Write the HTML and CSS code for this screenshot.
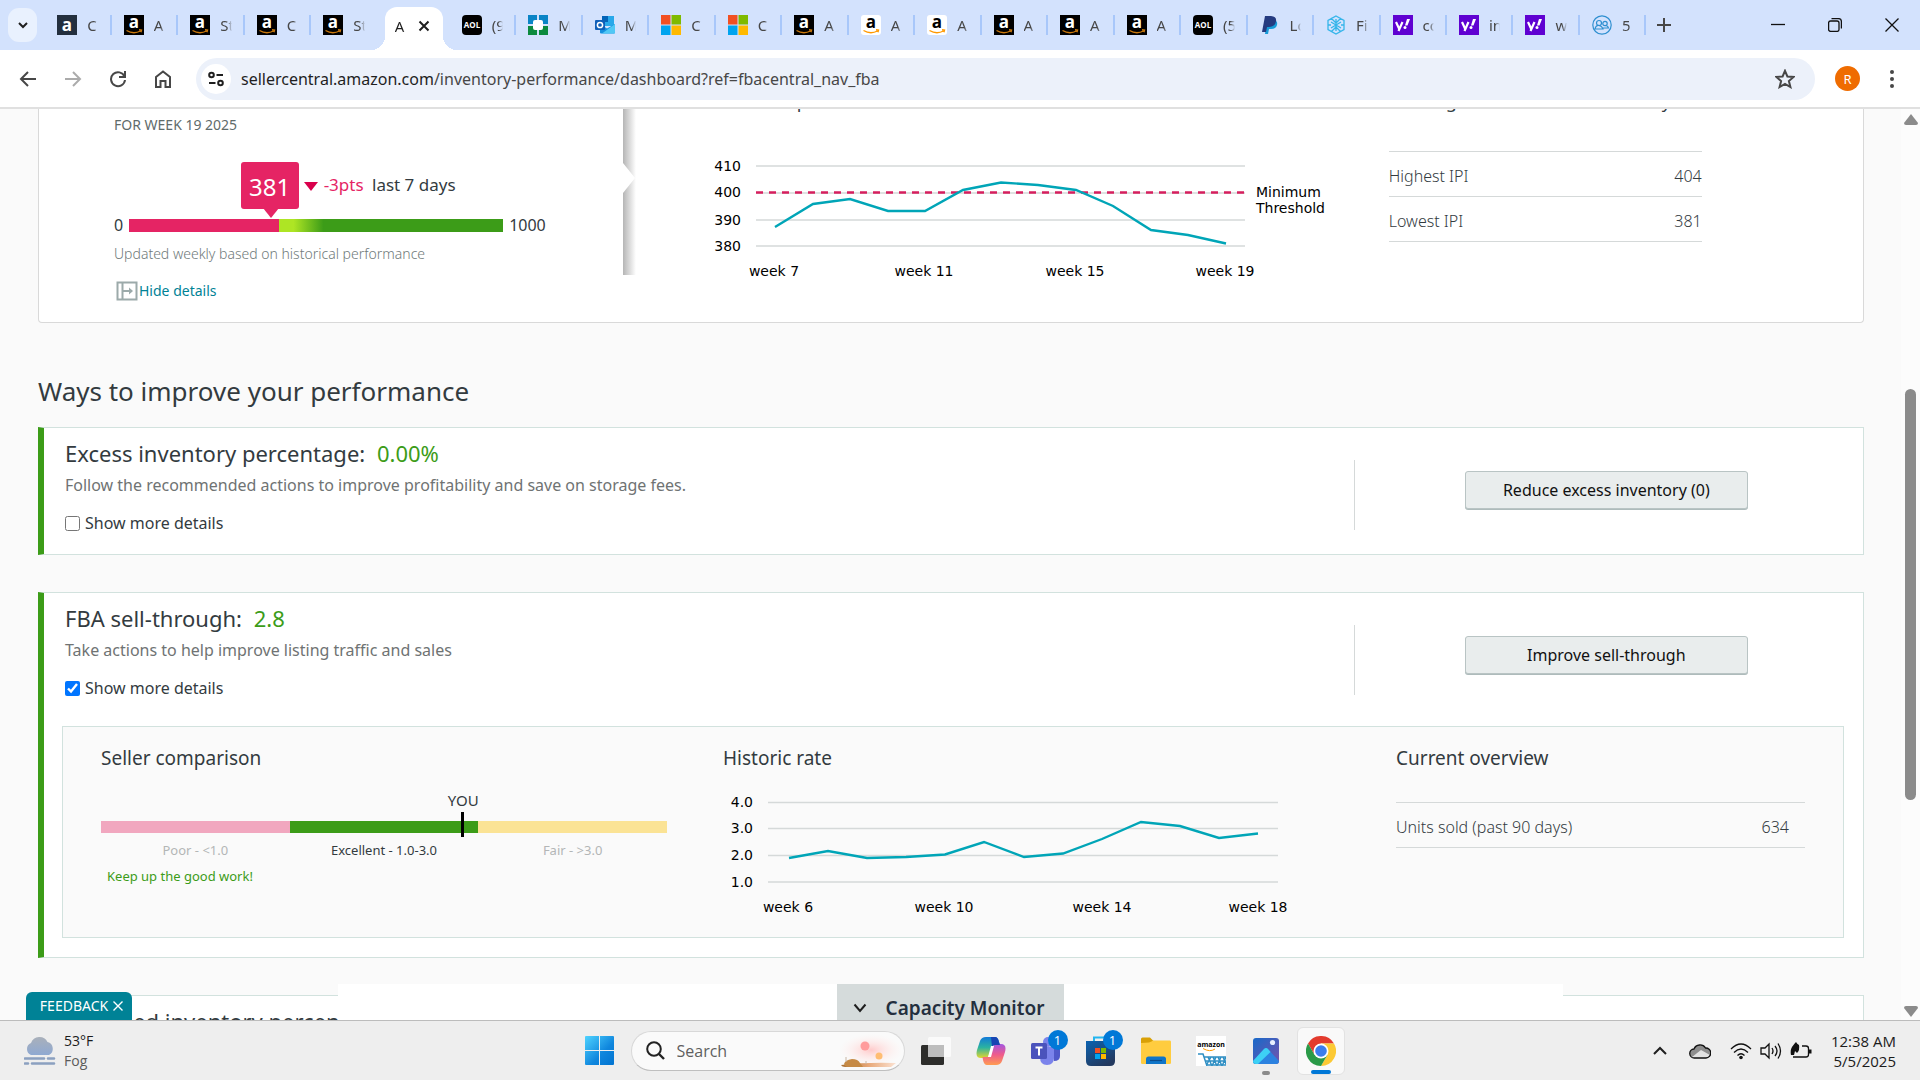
FILE: index.html
```html
<!DOCTYPE html>
<html lang="en">
<head>
    <meta charset="UTF-8">
    <meta name="viewport" content="width=device-width, initial-scale=1.0">
    <title>Inventory Performance</title>
    <link rel="stylesheet" href="styles.css">
</head>
<body>

<!-- Shared icons -->
<svg class="sprite" aria-hidden="true">
    <symbol id="fav-amazon-navy" viewBox="0 0 20 20">
        <rect width="20" height="20" fill="#232f3e"/>
        <text x="10" y="16" text-anchor="middle" class="fav-a" fill="#fff">a</text>
    </symbol>
    <symbol id="fav-amazon" viewBox="0 0 20 20">
        <rect width="20" height="20" fill="#000"/>
        <text x="10" y="13" text-anchor="middle" class="fav-a" fill="#fff">a</text>
        <path d="M2.5 15.5q7 4.200 14 .5M15 14.700l2.500 .3-.6 2.300" fill="none" stroke="#c9780c" stroke-width="1.400"/>
    </symbol>
    <symbol id="fav-amazon-white" viewBox="0 0 20 20">
        <rect width="20" height="20" rx="3" fill="#fff"/>
        <text x="10" y="13" text-anchor="middle" class="fav-a" fill="#000">a</text>
        <path d="M2.500 15.500q7 4.200 14 .5M15 14.700l2.500 .3-.6 2.300" fill="none" stroke="#f90" stroke-width="1.400"/>
    </symbol>
    <symbol id="fav-aol" viewBox="0 0 20 20">
        <rect width="20" height="20" rx="4" fill="#000"/>
        <text x="10" y="13" text-anchor="middle" class="fav-aol" fill="#fff">AOL</text>
    </symbol>
    <symbol id="fav-ms" viewBox="0 0 20 20">
        <path d="M0 0h9.500v9.500H0z" fill="#f25022"/>
        <path d="M10.500 0H20v9.500h-9.500z" fill="#7fba00"/>
        <path d="M0 10.500h9.500V20H0z" fill="#00a4ef"/>
        <path d="M10.500 10.500H20V20h-9.500z" fill="#ffb900"/>
    </symbol>
    <symbol id="fav-clover" viewBox="0 0 20 20">
        <path d="M0 0h9v9H0zM11 0h9v9h-9z" fill="#0a84c6"/>
        <path d="M0 11h9v9H0zM11 11h9v9h-9z" fill="#0b8a3e"/>
        <rect x="5" y="5" width="10" height="10" rx="2" fill="#fff"/>
    </symbol>
    <symbol id="fav-outlook" viewBox="0 0 20 20">
        <path d="M7 1h12v10H7z" fill="#28a8ea"/>
        <path d="M7 1h6v6H7z" fill="#0364b8"/>
        <path d="M5 9l7 4.500L20 9v8.500a1 1 0 0 1-1 1H6a1 1 0 0 1-1-1z" fill="#1490df"/>
        <path d="M20 9l-13 9.500h12a1 1 0 0 0 1-1z" fill="#50c8f5"/>
        <rect y="5" width="10" height="10" rx="1" fill="#0f5fb8"/>
        <circle cx="5" cy="10" r="2.600" fill="none" stroke="#fff" stroke-width="1.500"/>
    </symbol>
    <symbol id="fav-paypal" viewBox="0 0 20 20">
        <path d="M7 5h7q4 1 3 5t-6 4h-2l-1 5H5z" fill="#179bd7"/>
        <path d="M5 1h6q6 .5 5 5.500T9 12H7l-1 5H2z" fill="#253b80"/>
    </symbol>
    <symbol id="fav-hex" viewBox="0 0 20 20">
        <path d="M10 1l8 4.500v9L10 19l-8-4.500v-9zM10 4v12M5 7l10 6M15 7L5 13M10 8l-5-5M10 8l5-5M10 12l-5 5M10 12l5 5M2 10h3M15 10h3" fill="none" stroke="#35b5ea" stroke-width="1.300"/>
    </symbol>
    <symbol id="fav-yahoo" viewBox="0 0 20 20">
        <rect width="20" height="20" fill="#5f01d1"/>
        <path d="M3 7l3 6.500M9.500 7L5.500 16" fill="none" stroke="#fff" stroke-width="2.200"/>
        <path d="M14 4h3l-2.500 6.500H12z" fill="#fff"/>
        <circle cx="12" cy="12.500" r="1.500" fill="#fff"/>
    </symbol>
    <symbol id="fav-people" viewBox="0 0 20 20">
        <g fill="none" stroke="#2e8fd0" stroke-width="1.200">
            <circle cx="10" cy="10" r="9.200"/>
            <circle cx="7" cy="8" r="2.500"/>
            <circle cx="13" cy="8.500" r="2.200"/>
            <path d="M3 14q1-4 4-3.500t4 3.500zM11 13h5.500q-.5-2.500-3.500-2.500"/>
        </g>
    </symbol>
</svg>

<!-- Browser tabs -->
<header class="browser">
    <div class="tab-strip">
        <button class="tab-search" aria-label="Search tabs">
            <svg width="14" height="14" viewBox="0 0 14 14"><path d="M3 5l4 4 4-4" class="stroke-dark"/></svg>
        </button>
        <nav class="tabs" aria-label="Open tabs">
            <a href="#" class="tab"><svg class="favicon"><use href="#fav-amazon-navy"/></svg><span>C</span></a>
            <a href="#" class="tab"><svg class="favicon"><use href="#fav-amazon"/></svg><span>A</span></a>
            <a href="#" class="tab"><svg class="favicon"><use href="#fav-amazon"/></svg><span>St</span></a>
            <a href="#" class="tab"><svg class="favicon"><use href="#fav-amazon"/></svg><span>C</span></a>
            <a href="#" class="tab tab-before"><svg class="favicon"><use href="#fav-amazon"/></svg><span>St</span></a>
            <div class="tab tab-active">
                <span>A</span>
                <button class="tab-close" aria-label="Close tab">
                    <svg width="12" height="12" viewBox="0 0 12 12"><path d="M1.500 1.500l9 9M10.500 1.500l-9 9" class="stroke-dark"/></svg>
                </button>
            </div>
            <a href="#" class="tab"><svg class="favicon"><use href="#fav-aol"/></svg><span>(9</span></a>
            <a href="#" class="tab"><svg class="favicon"><use href="#fav-clover"/></svg><span>M</span></a>
            <a href="#" class="tab"><svg class="favicon"><use href="#fav-outlook"/></svg><span>M</span></a>
            <a href="#" class="tab"><svg class="favicon"><use href="#fav-ms"/></svg><span>C</span></a>
            <a href="#" class="tab"><svg class="favicon"><use href="#fav-ms"/></svg><span>C</span></a>
            <a href="#" class="tab"><svg class="favicon"><use href="#fav-amazon"/></svg><span>A</span></a>
            <a href="#" class="tab"><svg class="favicon"><use href="#fav-amazon-white"/></svg><span>A</span></a>
            <a href="#" class="tab"><svg class="favicon"><use href="#fav-amazon-white"/></svg><span>A</span></a>
            <a href="#" class="tab"><svg class="favicon"><use href="#fav-amazon"/></svg><span>A</span></a>
            <a href="#" class="tab"><svg class="favicon"><use href="#fav-amazon"/></svg><span>A</span></a>
            <a href="#" class="tab"><svg class="favicon"><use href="#fav-amazon"/></svg><span>A</span></a>
            <a href="#" class="tab"><svg class="favicon"><use href="#fav-aol"/></svg><span>(5</span></a>
            <a href="#" class="tab"><svg class="favicon"><use href="#fav-paypal"/></svg><span>Lo</span></a>
            <a href="#" class="tab"><svg class="favicon"><use href="#fav-hex"/></svg><span>Fi</span></a>
            <a href="#" class="tab"><svg class="favicon"><use href="#fav-yahoo"/></svg><span>co</span></a>
            <a href="#" class="tab"><svg class="favicon"><use href="#fav-yahoo"/></svg><span>in</span></a>
            <a href="#" class="tab"><svg class="favicon"><use href="#fav-yahoo"/></svg><span>w</span></a>
            <a href="#" class="tab"><svg class="favicon"><use href="#fav-people"/></svg><span>5</span></a>
        </nav>
        <button class="new-tab" aria-label="New tab">
            <svg width="14" height="14" viewBox="0 0 14 14"><path d="M7 0v14M0 7h14" class="stroke-gray"/></svg>
        </button>
        <div class="window-buttons">
            <button aria-label="Minimize"><svg width="14" height="14" viewBox="0 0 14 14"><path d="M0 6.500h14" class="stroke-thin"/></svg></button>
            <button aria-label="Restore"><svg width="14" height="14" viewBox="0 0 14 14"><rect x=".6" y="3" width="10.400" height="10.400" rx="2" class="stroke-thin"/><path d="M3.500 .6h7q2.900 0 2.900 2.900v7" class="stroke-thin"/></svg></button>
            <button aria-label="Close"><svg width="14" height="14" viewBox="0 0 14 14"><path d="M.5 .5l13 13M13.500 .5l-13 13" class="stroke-thin"/></svg></button>
        </div>
    </div>

    <!-- Toolbar -->
    <div class="toolbar">
        <button class="nav-btn" aria-label="Back"><svg width="18" height="18" viewBox="0 0 18 18"><path d="M17 9H2M9 2L2 9l7 7" class="stroke-gray"/></svg></button>
        <button class="nav-btn nav-disabled" aria-label="Forward" disabled><svg width="18" height="18" viewBox="0 0 18 18"><path d="M1 9h15M9 2l7 7-7 7" class="stroke-gray"/></svg></button>
        <button class="nav-btn" aria-label="Reload"><svg width="18" height="18" viewBox="0 0 18 18"><path d="M15.500 6.500A7 7 0 1 0 16 10M16 1v6h-6" class="stroke-gray"/></svg></button>
        <button class="nav-btn" aria-label="Home"><svg width="18" height="18" viewBox="0 0 18 18"><path d="M2 7l7-5.500L16 7v10h-4.500v-6h-5v6H2z" class="stroke-gray"/></svg></button>
        <div class="omnibox">
            <button class="site-info" aria-label="Site information">
                <svg width="16" height="16" viewBox="0 0 16 16"><g class="stroke-dark"><circle cx="3.500" cy="4" r="2.300"/><path d="M8.500 4H15M1 12h6.500"/><circle cx="12.500" cy="12" r="2.300"/></g></svg>
            </button>
            <a href="#" class="url">sellercentral.amazon.com<span>/inventory-performance/dashboard?ref=fbacentral_nav_fba</span></a>
            <button class="bookmark" aria-label="Bookmark this page">
                <svg width="20" height="20" viewBox="0 0 20 20"><path d="M10 1.800l2.400 5.700 6.200.5-4.700 4 1.500 6L10 14.800 4.600 18l1.500-6-4.700-4 6.200-.5z" class="stroke-gray"/></svg>
            </button>
        </div>
        <button class="profile" aria-label="Profile">R</button>
        <button class="menu" aria-label="Menu"><svg width="6" height="20" viewBox="0 0 6 20"><g fill="#474747"><circle cx="3" cy="3" r="2"/><circle cx="3" cy="10" r="2"/><circle cx="3" cy="17" r="2"/></g></svg></button>
    </div>
</header>

<div class="viewport">
    <main class="page">

        <!-- Inventory performance index -->
        <section class="ipi-card">
            <div class="ipi-score">
                <p class="ipi-week">FOR WEEK 19 2025</p>
                <div class="gauge">
                    <div class="gauge-head" style="--score: 38.1%">
                        <div class="gauge-badge">381</div>
                        <p class="gauge-trend"><i class="arrow-down"></i><span>-3pts</span> last 7 days</p>
                    </div>
                    <span class="gauge-min">0</span>
                    <div class="gauge-bar"></div>
                    <span class="gauge-max">1000</span>
                </div>
                <p class="ipi-note">Updated weekly based on historical performance</p>
                <a href="#" class="hide-details">
                    <svg width="22" height="20" viewBox="0 0 22 20"><path d="M1.500 1.500h19v17h-19zM6.500 1.500v17M7 10h8" fill="none" stroke="#9caaaa" stroke-width="2"/><path d="M13 6.500l4 3.500-4 3.500z" fill="#9caaaa"/></svg>Hide details
                </a>
            </div>
            <div class="ipi-trend">
                <div class="cut-heading" aria-hidden="true"><span>p</span></div>
                <svg class="chart" width="640" height="130" viewBox="0 0 640 130" role="img" aria-label="IPI score by week">
                    <g class="grid-lines"><path d="M54 11h489M54 38h489M54 65h489M54 91h489"/></g>
                    <path class="threshold" d="M54 37.500h489"/>
                    <polyline class="series" points="73,72 111,49 148,44 186,56 223,56 261,35 299,27.500 336,30 374,35 411,51 449,75 486,80 524,88.500"/>
                    <g class="axis-y"><text x="39" y="16">410</text><text x="39" y="42">400</text><text x="39" y="70">390</text><text x="39" y="96">380</text></g>
                    <g class="axis-x"><text x="72" y="121">week 7</text><text x="222" y="121">week 11</text><text x="373" y="121">week 15</text><text x="523" y="121">week 19</text></g>
                    <g class="axis-note"><text x="554" y="42">Minimum</text><text x="554" y="58">Threshold</text></g>
                </svg>
            </div>
            <div class="ipi-summary">
                <div class="cut-heading" aria-hidden="true"><span>g</span><span>y</span></div>
                <table class="facts">
                    <tr><th scope="row">Highest IPI</th><td>404</td></tr>
                    <tr><th scope="row">Lowest IPI</th><td>381</td></tr>
                </table>
            </div>
        </section>

        <h2>Ways to improve your performance</h2>

        <!-- Excess inventory -->
        <section class="metric">
            <div class="metric-row">
                <div class="metric-text">
                    <h3>Excess inventory percentage: <span>0.00%</span></h3>
                    <p>Follow the recommended actions to improve profitability and save on storage fees.</p>
                    <label class="more"><input type="checkbox"> Show more details</label>
                </div>
                <div class="metric-action"><button class="action-btn">Reduce excess inventory (0)</button></div>
            </div>
        </section>

        <!-- Sell-through -->
        <section class="metric">
            <div class="metric-row">
                <div class="metric-text">
                    <h3>FBA sell-through: <span>2.8</span></h3>
                    <p>Take actions to help improve listing traffic and sales</p>
                    <label class="more"><input type="checkbox" checked> Show more details</label>
                </div>
                <div class="metric-action"><button class="action-btn">Improve sell-through</button></div>
            </div>
            <div class="details">
                <div class="details-col">
                    <h4>Seller comparison</h4>
                    <div class="compare">
                        <div class="compare-you" style="--you: 64%"><span>YOU</span></div>
                        <div class="compare-bar"><i class="poor"></i><i class="excellent"></i><i class="fair"></i></div>
                        <div class="compare-labels"><span>Poor - &lt;1.0</span><strong>Excellent - 1.0-3.0</strong><span>Fair - &gt;3.0</span></div>
                    </div>
                    <p class="praise">Keep up the good work!</p>
                </div>
                <div class="details-col">
                    <h4>Historic rate</h4>
                    <svg class="chart" width="600" height="130" viewBox="0 0 600 130" role="img" aria-label="Sell-through by week">
                        <g class="grid-lines"><path d="M45 12.500h510M45 38.500h510M45 65.500h510M45 92h510"/></g>
                        <polyline class="series" points="66,68 105,61 144,68 183,67 222,64.500 261,52 301,67 340,63.500 379,49 418,32 457,36 496,48 535,43.500"/>
                        <g class="axis-y"><text x="30" y="17">4.0</text><text x="30" y="43">3.0</text><text x="30" y="70">2.0</text><text x="30" y="97">1.0</text></g>
                        <g class="axis-x"><text x="65" y="122">week 6</text><text x="221" y="122">week 10</text><text x="379" y="122">week 14</text><text x="535" y="122">week 18</text></g>
                    </svg>
                </div>
                <div class="details-col">
                    <h4>Current overview</h4>
                    <table class="facts facts-inset">
                        <tr><th scope="row">Units sold (past 90 days)</th><td>634</td></tr>
                    </table>
                </div>
            </div>
        </section>

        <!-- Stranded inventory -->
        <section class="metric">
            <div class="metric-row">
                <div class="metric-text">
                    <h3>Stranded inventory percentage:</h3>
                </div>
            </div>
        </section>
    </main>

    <div class="scrollbar">
        <svg width="14" height="12" viewBox="0 0 14 12"><path d="M7 0l7 9q0 2-2 2H2q-2 0-2-2z"/></svg>
        <div class="scroll-track"><div class="scroll-thumb"></div></div>
        <svg width="14" height="12" viewBox="0 0 14 12"><path d="M7 11L0 2q0-2 2-2h10q2 0 2 2z"/></svg>
    </div>

    <div class="capacity">
        <button class="capacity-btn">
            <svg width="14" height="10" viewBox="0 0 14 10"><path d="M1.500 1.500L7 8l5.500-6.500" class="stroke-dark"/></svg>
            Capacity Monitor
        </button>
    </div>
    <button class="feedback">FEEDBACK <svg width="10" height="10" viewBox="0 0 10 10"><path d="M.5 .5l9 9M9.500 .5l-9 9" stroke="#fff" stroke-width="1.400"/></svg></button>
</div>

<!-- Taskbar -->
<footer class="taskbar">
    <button class="weather">
        <svg width="32" height="30" viewBox="0 0 32 30">
            <defs><linearGradient id="cloud" x2="0" y2="1"><stop offset="0" stop-color="#a9b0ba"/><stop offset="1" stop-color="#8fa9d2"/></linearGradient></defs>
            <path d="M7 19a6.500 6.500 0 0 1 0-12 9 9 0 0 1 16.500-1A7 7 0 0 1 25 19z" fill="url(#cloud)"/>
            <path d="M1 22.500h19M24 22.500h6M1 27.500h3M8 27.500h22" stroke="#8ba0c0" stroke-width="2.600" stroke-linecap="round"/>
        </svg>
        <span>53°F<small>Fog</small></span>
    </button>

    <div class="apps">
        <button class="app" aria-label="Start">
            <svg width="29" height="29" viewBox="0 0 29 29">
                <defs><linearGradient id="win" x2="1" y2="1"><stop offset="0" stop-color="#4fd3ff"/><stop offset=".6" stop-color="#0f86dd"/><stop offset="1" stop-color="#0173d0"/></linearGradient></defs>
                <path d="M1 0h13v14H0V1q0-1 1-1zM15 0h13q1 0 1 1v13H15zM0 15h14v14H1q-1 0-1-1zM15 15h14v13q0 1-1 1H15z" fill="url(#win)"/>
            </svg>
        </button>
        <div class="search">
            <svg width="19" height="19" viewBox="0 0 19 19"><circle cx="8" cy="8" r="6.800" fill="none" stroke="#222" stroke-width="2"/><path d="M13 13l5 5" stroke="#222" stroke-width="2.400"/></svg>
            <input type="text" placeholder="Search" aria-label="Search">
            <svg class="search-art" width="64" height="36" viewBox="0 0 64 36">
                <defs>
                    <radialGradient id="glow"><stop offset="0" stop-color="#ffcaca"/><stop offset="1" stop-color="#fff0ee" stop-opacity="0"/></radialGradient>
                    <linearGradient id="sand"><stop offset="0" stop-color="#a87034"/><stop offset=".5" stop-color="#e8a878"/><stop offset="1" stop-color="#fbe2d2"/></linearGradient>
                </defs>
                <ellipse cx="34" cy="17" rx="32" ry="16" fill="url(#glow)"/>
                <circle cx="28" cy="13" r="4.500" fill="#ff9c9c"/>
                <circle cx="42" cy="23" r="3.500" fill="#ffbd73"/>
                <path d="M4 32q25-3 55-2l-5 4H8q-3 0-4-2z" fill="url(#sand)"/>
                <path d="M7 31q1-4 8-5 6 0 8 4l3 4H12q-4 0-5-3z" fill="#c68a45"/>
                <path d="M9 29v-5M29 31v-3" stroke="#c9b6a5"/>
            </svg>
        </div>
        <button class="app" aria-label="Task view">
            <svg width="30" height="28" viewBox="0 0 30 28"><rect y="8" width="23" height="20" rx="1.500" fill="#2d2d2b"/><rect x="7" width="23" height="20" rx="1.500" fill="#fafafa"/><path d="M7 8h16v12H8.500Q7 20 7 18.500z" fill="#bdbdbd"/></svg>
        </button>
        <button class="app" aria-label="Copilot">
            <svg width="30" height="28" viewBox="0 0 30 28">
                <defs>
                    <linearGradient id="cp1" x2="0" y2="1"><stop offset="0" stop-color="#1279d8"/><stop offset=".5" stop-color="#2bb3a0"/><stop offset="1" stop-color="#e2d62e"/></linearGradient>
                    <linearGradient id="cp2" x2="0" y2="1"><stop offset="0" stop-color="#a357e0"/><stop offset=".5" stop-color="#ee5a8d"/><stop offset="1" stop-color="#ff9c50"/></linearGradient>
                </defs>
                <path d="M10 0h9q3 0 4 5l1 3h-5q-3 0-4 4l-2 6q-1 3-4 3H5q-6 0-4-8l3-9q1.500-4 6-4z" fill="url(#cp1)"/>
                <path d="M20 28h-9q-3 0-4-5l-.5-3H11q3 0 4-4l2-6q1-3 4-3h4q6 0 4 8l-3 9q-1.500 4-6 4z" fill="url(#cp2)"/>
                <path d="M15 0h4q3 0 4 5l1 3h-5q-2 0-3 2z" fill="#1745b3"/>
                <path d="M12 20l3-11h3l-3 11z" fill="#fff"/>
            </svg>
        </button>
        <button class="app" aria-label="Teams">
            <svg width="30" height="28" viewBox="0 0 30 28"><circle cx="17" cy="5" r="5" fill="#7b83eb"/><path d="M20 10h9v9q0 5-6 5z" fill="#5059c9"/><path d="M10 10h13v10q0 8-7 8t-7-8z" fill="#7b83eb"/><rect y="6" width="16" height="16" rx="1.500" fill="#4b53bc"/><path d="M4.500 10.500h7M8 10.500v8" stroke="#fff" stroke-width="2"/></svg>
            <span class="badge">1</span>
        </button>
        <button class="app" aria-label="Microsoft Store">
            <svg width="30" height="30" viewBox="0 0 30 30">
                <defs><linearGradient id="store" x2="0.600" y2="1"><stop offset="0" stop-color="#0b62b0"/><stop offset="1" stop-color="#23395f"/></linearGradient></defs>
                <path d="M8 6V1.500h14V6" fill="none" stroke="#23b6f0" stroke-width="2"/>
                <path d="M0 5h29v20q0 5-5 5H5q-5 0-5-5z" fill="url(#store)"/>
                <path d="M9 12h5v5H9z" fill="#f25022"/><path d="M15 12h5v5h-5z" fill="#7fba00"/><path d="M9 18h5v5H9z" fill="#00a4ef"/><path d="M15 18h5v5h-5z" fill="#ffb900"/>
            </svg>
            <span class="badge">1</span>
        </button>
        <button class="app" aria-label="File Explorer">
            <svg width="30" height="28" viewBox="0 0 30 28"><path d="M0 2q0-1.500 1.500-1.500H9L12.500 4H15v6H0z" fill="#d9a006"/><path d="M0 6q10 0 12-2.500h17q1 0 1 1.500v21q0 1-1.500 1h-27Q0 27 0 26z" fill="#ffcc3f"/><path d="M5 27v-5q0-2.500 2.500-2.500h15q2.500 0 2.500 2.500v5z" fill="#0f75c8"/><path d="M9 23.500h12" stroke="#0a4c8c" stroke-width="1.200"/></svg>
        </button>
        <button class="app" aria-label="Amazon">
            <svg width="30" height="30" viewBox="0 0 30 30"><path d="M0 0h30v30H0z" fill="#fff"/><text x="15" y="11" text-anchor="middle" class="shop-text">amazon</text><path d="M7 12.500q7 4 12 .5" fill="none" stroke="#f90"/><path d="M2 18h5l4 12M8 21h22M10 25h20M11 29h19M12 21l4 9M17 21l4 9M22 21l4 9M27 21l3 7M15 21l-4 7M20 21l-4 9M25 21l-4 9M30 21l-4 9" fill="none" stroke="#2f8fc4" stroke-width="1.500"/></svg>
        </button>
        <button class="app app-running" aria-label="Photos">
            <svg width="26" height="26" viewBox="0 0 26 26">
                <defs><linearGradient id="photo" x2="1" y2="1"><stop offset="0" stop-color="#1769c9"/><stop offset="1" stop-color="#7653ad"/></linearGradient></defs>
                <rect width="26" height="26" rx="3" fill="url(#photo)"/><circle cx="19.500" cy="4.500" r="2.600" fill="#e8f0ff"/><path d="M0 23L11 11q2-2 4 0l11 12q0 3-3 3H3q-3 0-3-3z" fill="#2c82e0"/><path d="M0 23L11 11q2-2 4 0l2.500 3L5 26H3q-3 0-3-3z" fill="#3dd0f5"/>
            </svg>
        </button>
        <button class="app app-current" aria-label="Google Chrome">
            <svg width="30" height="30" viewBox="0 0 30 30">
                <path d="M2 7.500a15 15 0 0 1 26 0H15L8.500 18.700z" fill="#e33b2e"/>
                <path d="M28 7.500A15 15 0 0 1 15 30l6.500-11.200L15 7.500z" fill="#fcc934"/>
                <path d="M15 30A15 15 0 0 1 2 7.500l6.500 11.300H21.500z" fill="#2a9a48"/>
                <circle cx="15" cy="15" r="7.500" fill="#fff"/><circle cx="15" cy="15" r="5.800" fill="#3b7ded"/>
            </svg>
        </button>
    </div>

    <div class="tray">
        <button aria-label="Show hidden icons"><svg width="14" height="10" viewBox="0 0 14 10"><path d="M1 8l6-6 6 6" class="stroke-dark"/></svg></button>
        <button class="tray-cloud" aria-label="OneDrive"><svg width="22" height="18" viewBox="0 0 22 18"><path d="M5.500 16a4.500 4.500 0 0 1-.5-9 6.500 6.500 0 0 1 11.500-1A5 5 0 0 1 17 16z" fill="#8e8e8e"/><path d="M3 15l9-7 9 5q-1 3-4 3H5z" fill="#e2e2e2"/><path d="M5.500 16a4.500 4.500 0 0 1-.5-9 6.500 6.500 0 0 1 11.500-1A5 5 0 0 1 17 16z" class="stroke-thin"/></svg></button>
        <button class="tray-status" aria-label="Network, volume and battery">
            <svg width="22" height="18" viewBox="0 0 22 18"><path d="M1 7q10-10 20 0M4 10.500q7-7 14 0M7.500 13.500q3.500-3.500 7 0" class="stroke-thin"/><circle cx="11" cy="15.500" r="1.800" fill="#111"/></svg>
            <svg width="22" height="18" viewBox="0 0 22 18"><path d="M1 6h4l4-4v14l-4-4H1zM12 6q2 3 0 6M15 4q4 5 0 10M18 1.500q5 7.500 0 15" class="stroke-thin"/></svg>
            <svg width="22" height="18" viewBox="0 0 22 18"><path d="M12 4h4q2.500 0 2.500 2.500v6q0 2.500-2.500 2.500H3" class="stroke-thin"/><path d="M19 7.500h2.500v4H19z" fill="#111"/><path d="M1 13q-1-5 1-8 2-3 4-5 1 2 3 3 1 5-2 8l-2-2-1 4z" fill="#111"/></svg>
        </button>
        <button class="clock">12:38 AM<br>5/5/2025</button>
    </div>
</footer>

</body>
</html>
```
FILE: styles.css
```css
* {
    box-sizing: border-box;
}
body {
    margin: 0;
    height: 100vh;
    display: flex;
    flex-direction: column;
    overflow: hidden;
    font-family: "Noto Sans", "Open Sans", sans-serif;
    font-size: 16px;
    line-height: 20px;
    color: #333b3f;
    background-color: #fafafa;
}
h2, h3, h4, p {
    margin: 0;
    font-weight: normal;
}
button {
    font: inherit;
    color: inherit;
    background: none;
    border: none;
    padding: 0;
    display: flex;
    align-items: center;
    justify-content: center;
    cursor: pointer;
}
a {
    color: inherit;
    text-decoration: none;
}
svg {
    flex: none;
    display: block;
}
.sprite {
    display: none;
}
.stroke-dark, .stroke-gray, .stroke-thin {
    fill: none;
    stroke: #1f1f1f;
    stroke-width: 2;
}
.stroke-gray {
    stroke: #474747;
}
.stroke-thin {
    stroke: #111;
    stroke-width: 1.3;
}

/* Tabs */
.tab-strip {
    display: flex;
    align-items: center;
    height: 50px;
    background-color: #d3e2fd;
}
.tab-search {
    width: 34px;
    height: 34px;
    margin: 0 8px;
    border-radius: 11px;
    background-color: #e9f1fe;
}
.tabs {
    flex: 1;
    display: flex;
    height: 50px;
}
.tab {
    position: relative;
    flex: 1 1 0;
    min-width: 0;
    display: flex;
    align-items: center;
    gap: 10px;
    padding: 0 13px 0 12px;
    font-size: 15px;
    color: #474747;
}
.tab::after {
    content: "";
    position: absolute;
    right: 0;
    top: 15px;
    width: 2px;
    height: 20px;
    background-color: #a8c7fa;
}
.tab span {
    flex: 1;
    overflow: hidden;
    white-space: nowrap;
    -webkit-mask-image: linear-gradient(90deg, #000 60%, transparent);
    mask-image: linear-gradient(90deg, #000 60%, transparent);
}
.tab-before::after {
    display: none;
}
.favicon {
    width: 20px;
    height: 20px;
}
.fav-a {
    font: bold 17px "Open Sans", sans-serif;
}
.fav-aol {
    font: bold 8px "Open Sans", sans-serif;
}
.tab-active {
    flex: 0 0 58px;
    align-self: flex-end;
    height: 43px;
    margin: 0 7px;
    padding: 0 13px 6px 10px;
    border-radius: 12px 12px 0 0;
    background-color: #fff;
    color: #1f1f1f;
}
.tab-active::before, .tab-active::after {
    content: "";
    position: absolute;
    top: auto;
    right: auto;
    bottom: 0;
    left: -14px;
    width: 14px;
    height: 14px;
    background: radial-gradient(circle at 0 0, transparent 14px, #fff 14px);
}
.tab-active::after {
    left: 100%;
    background: radial-gradient(circle at 100% 0, transparent 14px, #fff 14px);
}
.new-tab {
    width: 40px;
    height: 34px;
}
.window-buttons {
    display: flex;
    margin-left: 68px;
}
.window-buttons button {
    width: 57px;
    height: 44px;
}

/* Toolbar */
.toolbar {
    display: flex;
    align-items: center;
    height: 59px;
    padding: 0 13px 0 5px;
    background-color: #fff;
    border-bottom: 2px solid #e0e0e0;
}
.nav-btn {
    width: 45px;
    height: 40px;
}
.nav-disabled {
    opacity: 0.45;
}
.omnibox {
    flex: 1;
    display: flex;
    align-items: center;
    height: 42px;
    margin-left: 11px;
    padding: 0 20px 0 5px;
    border-radius: 21px;
    background-color: #ecf1fa;
}
.site-info {
    width: 30px;
    height: 30px;
    border-radius: 50%;
    background-color: #fff;
}
.url {
    flex: 1;
    margin-left: 10px;
    color: #1f1f1f;
}
.url span {
    color: #474747;
}
.profile {
    width: 25px;
    height: 25px;
    margin-left: 20px;
    border-radius: 50%;
    background-color: #ef6c00;
    color: #fff;
    font-size: 13px;
}
.menu {
    width: 30px;
    height: 40px;
    margin-left: 17px;
}

/* Page area */
.viewport {
    position: relative;
    flex: 1;
    min-height: 0;
    display: flex;
    overflow: hidden;
}
.page {
    flex: 1;
    padding: 0 37px 0 38px;
}
.page h2 {
    margin: 50px 0 18px;
    font-size: 26px;
    line-height: 36px;
}

/* IPI card */
.ipi-card {
    display: grid;
    grid-template-columns: 32fr 42fr 26fr;
    background-color: #fff;
    border: 1px solid #d9d9d9;
    border-top: none;
    border-radius: 0 0 4px 4px;
    padding-bottom: 17px;
}
.ipi-score {
    padding: 6px 0 0 75px;
}
.ipi-week {
    font-size: 14px;
    color: #5f6b6b;
}
.gauge {
    display: grid;
    grid-template-columns: auto 374px auto;
    justify-content: start;
    align-items: center;
    column-gap: 6px;
    margin-top: 27px;
}
.gauge-head {
    grid-column: 2;
    display: flex;
    gap: 5px;
    margin: 0 -60px 6px calc(var(--score) - 31px);
}
.gauge-badge {
    position: relative;
    width: 58px;
    height: 47px;
    border-radius: 3px;
    background-color: #e52464;
    color: #fff;
    font-size: 24px;
    line-height: 50px;
    text-align: center;
}
.gauge-badge::after {
    content: "";
    position: absolute;
    left: 22px;
    top: 46px;
    border: 8px solid transparent;
    border-top: 10px solid #e52464;
    border-bottom: none;
}
.gauge-trend {
    font-size: 17px;
    line-height: 46px;
}
.gauge-trend span {
    color: #e52464;
    margin-right: 4px;
}
.arrow-down {
    display: inline-block;
    margin-right: 6px;
    border: 7px solid transparent;
    border-top: 9px solid #d9004c;
    border-bottom: none;
}
.gauge-min {
    grid-column: 1;
}
.gauge-bar {
    height: 13px;
    background: linear-gradient(90deg, #e52464 40%, #aee524 40%, #aee524 44%, #3c9c18 52%);
}
.ipi-note {
    margin-top: 9px;
    font-size: 14px;
    font-weight: 300;
    color: #6f7a7a;
}
.hide-details {
    display: inline-flex;
    align-items: center;
    gap: 1px;
    margin: 17px 0 0 2px;
    font-size: 14px;
    color: #008296;
}
.ipi-trend {
    position: relative;
    padding-left: 79px;
    background: linear-gradient(90deg, #b5b5b5, #fff) no-repeat left top / 13px 166px;
}
.ipi-trend::before {
    content: "";
    position: absolute;
    left: 0;
    top: 54px;
    border: 15px solid transparent;
    border-left: 12px solid #fff;
    border-right: none;
}
.cut-heading {
    display: flex;
    align-items: flex-end;
    gap: 205px;
    height: 3px;
    padding-left: 57px;
    overflow: hidden;
    font-size: 18px;
    line-height: 22px;
}
.ipi-trend .cut-heading {
    padding-left: 95px;
}
.ipi-trend .chart {
    margin-top: 43px;
}
.facts {
    width: 100%;
    border-collapse: collapse;
    font-weight: 300;
}
.facts tr {
    border-top: 1px solid #d5d9d9;
    border-bottom: 1px solid #d5d9d9;
}
.facts th, .facts td {
    height: 45px;
    padding: 4px 0 0;
    font-weight: 300;
    text-align: left;
}
.facts td {
    text-align: right;
}
.ipi-summary .facts {
    width: 66%;
    margin-top: 39px;
}

/* Charts */
.grid-lines {
    stroke: #d5d9d9;
    stroke-width: 1.4;
}
.threshold {
    stroke: #d61f5e;
    stroke-width: 2.4;
    stroke-dasharray: 7 6;
}
.series {
    fill: none;
    stroke: #00a5b7;
    stroke-width: 2.4;
}
.axis-y, .axis-x, .axis-note {
    font-family: "DejaVu Sans", Verdana, sans-serif;
    font-size: 14px;
    fill: #000;
}
.axis-y {
    text-anchor: end;
}
.axis-x {
    text-anchor: middle;
}

/* Metrics */
.metric {
    margin-bottom: 37px;
    background-color: #fff;
    border: 1px solid #d2e2de;
    border-left: 6px solid #3c9c18;
}
.metric-row {
    display: grid;
    grid-template-columns: 18fr 7fr;
}
.metric-text {
    padding: 12px 20px 21px 21px;
}
.metric-text h3 {
    font-size: 22px;
    line-height: 26px;
}
.metric-text h3 span {
    margin-left: 6px;
    color: #3c9c18;
}
.metric-text p {
    margin-top: 9px;
    color: #6f7373;
}
.more {
    display: flex;
    align-items: center;
    gap: 5px;
    margin-top: 18px;
}
.more input {
    width: 15px;
    height: 15px;
    margin: 0;
}
.metric-action {
    display: flex;
    align-items: center;
    justify-content: center;
    height: 70px;
    margin-top: 32px;
    padding: 0 5px 11px 0;
    border-left: 1px solid #d5d9d9;
}
.action-btn {
    width: 283px;
    height: 38px;
    border: 1px solid #b9c4c4;
    border-radius: 3px;
    background-color: #e9eded;
    color: #111;
    box-shadow: 0 1px 0 #aebbbb;
}

/* Details panel */
.details {
    display: grid;
    grid-template-columns: 73fr 79fr 48fr;
    min-height: 212px;
    margin: 7px 19px 19px 18px;
    padding: 19px 38px 10px;
    background-color: #fafafa;
    border: 1px solid #d2e2de;
}
.details h4 {
    font-size: 19px;
    line-height: 24px;
}
.details .chart {
    margin-top: 20px;
}
.details .facts {
    margin-top: 32px;
}
.facts-inset td {
    padding-right: 16px;
}
.compare {
    width: 91%;
    margin-top: 20px;
}
.compare-you {
    position: relative;
    width: var(--you);
    height: 31px;
    font-size: 15px;
}
.compare-you span {
    position: absolute;
    right: 0;
    top: 0;
    transform: translateX(50%);
}
.compare-you::after {
    content: "";
    position: absolute;
    right: -1px;
    top: 22px;
    width: 3px;
    height: 25px;
    background-color: #000;
}
.compare-bar {
    display: flex;
}
.compare-bar i {
    flex: 1;
    height: 12px;
}
.poor {
    background-color: #f1a7bf;
}
.excellent {
    background-color: #3c9c18;
}
.fair {
    background-color: #fbe395;
}
.compare-labels {
    display: flex;
    margin-top: 9px;
    font-size: 13px;
    line-height: 16px;
    text-align: center;
    color: #b3b6b6;
}
.compare-labels span, .compare-labels strong {
    flex: 1;
    font-weight: normal;
}
.compare-labels strong {
    color: #333b3f;
}
.praise {
    margin: 8px 0 0 6px;
    font-size: 13px;
    color: #3c9c18;
}

/* Scrollbar */
.scrollbar {
    display: flex;
    flex-direction: column;
    align-items: center;
    width: 19px;
    padding: 5px 0 2px 0;
    background-color: #fcfcfc;
    fill: #8b8b8b;
}
.scroll-track {
    flex: 1;
    padding: 263px 0 206px;
}
.scroll-thumb {
    width: 11px;
    height: 100%;
    border-radius: 6px;
    background-color: #8b8b8b;
}

/* Floating bars at the bottom */
.capacity {
    position: absolute;
    bottom: 0;
    left: 338px;
    right: 357px;
    height: 36px;
    display: flex;
    justify-content: center;
    background-color: #fff;
}
.capacity-btn {
    gap: 19px;
    width: 227px;
    padding: 12px 4px 0 0;
    background-color: #d5dbdb;
    font-size: 19px;
    font-weight: 600;
    color: #232f3e;
}
.feedback {
    position: absolute;
    bottom: 0;
    left: 26px;
    gap: 5px;
    width: 106px;
    height: 28px;
    padding-left: 5px;
    border-radius: 6px 6px 0 0;
    background-color: #008296;
    color: #fff;
    font-size: 14px;
}

/* Taskbar */
.taskbar {
    display: grid;
    grid-template-columns: 1fr auto 1fr;
    align-items: center;
    height: 60px;
    padding: 0 24px;
    background-color: #eee;
    border-top: 1px solid #bcbcbc;
    color: #1b1b1b;
    font-family: "Open Sans", sans-serif;
    font-size: 14px;
}
.weather {
    justify-self: start;
    gap: 8px;
    text-align: left;
}
.weather small {
    display: block;
    font-size: 14px;
    color: #5b5b5b;
}
.apps {
    display: flex;
    align-items: center;
    gap: 7px;
}
.app {
    position: relative;
    width: 48px;
    height: 48px;
    border-radius: 6px;
}
.app-current {
    background-color: #f9f9f9;
    border: 1px solid #e2e2e2;
}
.app-current::after, .app-running::after {
    content: "";
    position: absolute;
    bottom: 0;
    left: 20px;
    width: 8px;
    height: 4px;
    border-radius: 2px;
    background-color: #8a8a8a;
}
.app-current::after {
    left: 13px;
    width: 20px;
    background-color: #0078d7;
}
.badge {
    position: absolute;
    right: 2px;
    top: 3px;
    width: 20px;
    height: 20px;
    border-radius: 50%;
    background-color: #0078d7;
    color: #fff;
    font-size: 13px;
    line-height: 20px;
}
.shop-text {
    font: bold 7px "Open Sans", sans-serif;
}
.search {
    display: flex;
    align-items: center;
    gap: 12px;
    width: 274px;
    height: 40px;
    padding: 0 3px 0 14px;
    border: 1px solid #d8d8d8;
    border-bottom-color: #bfbfbf;
    border-radius: 20px;
    background-color: #fafafa;
}
.search input {
    flex: 1;
    min-width: 0;
    padding: 0;
    border: none;
    background: none;
    outline: none;
    font-family: inherit;
    font-size: 16px;
}
.search input::placeholder {
    color: #5f5f5f;
}
.tray {
    justify-self: end;
    display: flex;
    align-items: center;
}
.tray-cloud {
    margin: 0 19px 0 22px;
}
.tray-status {
    gap: 8px;
}
.clock {
    margin-left: 19px;
    font-size: 15px;
    text-align: right;
}
```
